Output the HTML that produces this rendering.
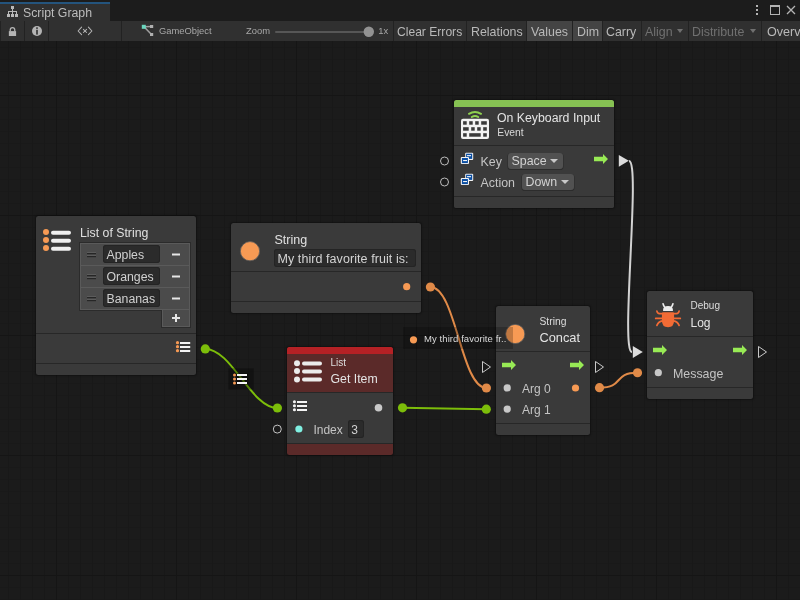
<!DOCTYPE html>
<html><head><meta charset="utf-8">
<style>
*{margin:0;padding:0;box-sizing:border-box}
html,body{width:800px;height:600px;overflow:hidden;background:#1b1b1b;font-family:"Liberation Sans",sans-serif;}
body{will-change:transform}
.a{position:absolute}
.t{position:absolute;white-space:pre;line-height:1;color:#c4c4c4}
#canvas{position:absolute;left:0;top:41px;width:800px;height:559px;background-color:#1b1b1b;
 background-image:
  linear-gradient(to right,#151515 1px,transparent 1px),
  linear-gradient(to bottom,#151515 1px,transparent 1px),
  linear-gradient(to right,#181818 1px,transparent 1px),
  linear-gradient(to bottom,#191919 1px,transparent 1px);
 background-size:120px 120px,120px 120px,12px 12px,12px 12px;
 background-position:56px 54px,56px 54px,8px 6px,8px 6px;}
#hdr{position:absolute;left:0;top:0;width:800px;height:21px;background:#1c1c1c}
#tab{position:absolute;left:0;top:2px;width:110px;height:19px;background:#303030;border-top:2px solid #24547d}
#tb{position:absolute;left:0;top:21px;width:800px;height:20px;background:#303030}
.sep{position:absolute;top:21px;width:1px;height:20px;background:#222}
.btn{position:absolute;top:21px;height:20px;background:#444}
.tbt{position:absolute;top:25.8px;font-size:12.4px;white-space:pre;line-height:1;color:#b9b9b9}
.node{position:absolute;background:#3a3a3a;border-radius:2.5px;overflow:hidden;box-shadow:0 0 1.5px 0.5px rgba(0,0,0,0.35)}
.hd{position:absolute;left:0;right:0;background:#393939}
.dv{position:absolute;left:0;right:0;height:1px;background:#272727}
.dot{position:absolute;border-radius:50%}
.fld{position:absolute;background:#2b2b2b;border-radius:3px;box-shadow:inset 0 0 0 1px #242424}
.dd{position:absolute;background:#515151;border-radius:3px;box-shadow:0 0.5px 0 0.6px #2c2c2c}
.tri{position:absolute;width:0;height:0;border-left:4px solid transparent;border-right:4px solid transparent;border-top:4px solid #c4c4c4}
svg{position:absolute;left:0;top:0;overflow:visible}
</style></head><body>
<div id="canvas"></div>

<!-- ===== header ===== -->
<div id="hdr"></div>
<div id="tab"></div>
<svg width="24" height="24" style="left:0;top:0" viewBox="0 0 24 24">
 <g fill="#b8b8b8"><rect x="11" y="6" width="3" height="3"/><rect x="12" y="9" width="1" height="5"/><rect x="8" y="11" width="9" height="1"/><rect x="8" y="11" width="1" height="3"/><rect x="16" y="11" width="1" height="3"/>
 <rect x="7" y="14" width="3" height="3"/><rect x="11" y="14" width="3" height="3"/><rect x="15" y="14" width="3" height="3"/></g>
</svg>
<div class="t" style="left:23px;top:6.5px;font-size:12.3px;color:#bcbcbc">Script Graph</div>
<!-- window icons -->
<div class="a" style="left:756px;top:5px;width:2px;height:2px;background:#b4b4b4"></div>
<div class="a" style="left:756px;top:9px;width:2px;height:2px;background:#b4b4b4"></div>
<div class="a" style="left:756px;top:13px;width:2px;height:2px;background:#b4b4b4"></div>
<div class="a" style="left:770px;top:5px;width:10px;height:10px;border:1px solid #b4b4b4;border-top-width:2px"></div>
<svg width="10" height="10" style="left:786px;top:5px" viewBox="0 0 10 10"><path d="M1 1L9 9M9 1L1 9" stroke="#b4b4b4" stroke-width="1.3"/></svg>

<!-- ===== toolbar ===== -->
<div id="tb"></div>
<div class="sep" style="left:0px"></div>
<div class="sep" style="left:24px"></div>
<div class="sep" style="left:48px"></div>
<div class="sep" style="left:121px"></div>
<div class="sep" style="left:393px"></div>
<div class="btn" style="left:527px;width:46px"></div>
<div class="btn" style="left:573px;width:30px"></div>
<div class="sep" style="left:466px"></div>
<div class="sep" style="left:526px"></div>
<div class="sep" style="left:572px"></div>
<div class="sep" style="left:602px"></div>
<div class="sep" style="left:641px"></div>
<div class="sep" style="left:688px"></div>
<div class="sep" style="left:761px"></div>
<!-- lock -->
<svg width="10" height="12" style="left:8px;top:26px" viewBox="0 0 10 12"><path d="M2.25 5.3V3.8a2.25 2.25 0 0 1 4.5 0V5.3" fill="none" stroke="#b4b4b4" stroke-width="1.3"/><rect x="0.85" y="5.1" width="7.25" height="4.9" fill="#b4b4b4"/></svg>
<!-- info -->
<svg width="12" height="12" style="left:31px;top:25px" viewBox="0 0 12 12"><circle cx="6" cy="6" r="5" fill="#b4b4b4"/><rect x="5.2" y="2.3" width="1.6" height="1.6" fill="#303030"/><rect x="5.2" y="4.8" width="1.6" height="4.8" fill="#303030"/></svg>
<!-- <x> -->
<svg width="30" height="22" style="left:70px;top:20px" viewBox="0 0 30 22"><path d="M11.6 7.1L8.1 11L11.6 14.6M18.4 7.1L21.9 11L18.4 14.6M13.4 9.3L16.6 12.5M16.6 9.3L13.4 12.5" fill="none" stroke="#b4b4b4" stroke-width="1.05" stroke-linecap="round" stroke-linejoin="round"/></svg>
<!-- gameobject icon -->
<svg width="14" height="13" style="left:141px;top:24px" viewBox="0 0 14 13"><path d="M3 2.8L10.5 2.5M3 2.8L10.5 10.5" stroke="#a0a0a0" stroke-width="1.5"/><rect x="0.8" y="0.8" width="4" height="4" fill="#6ad6be"/><rect x="9" y="1" width="3.2" height="3" fill="#b0b0b0"/><rect x="9" y="9" width="3.2" height="3" fill="#b0b0b0"/></svg>
<div class="tbt" style="left:159px;top:25.8px;font-size:9.4px;color:#a8a8a8">GameObject</div>
<div class="tbt" style="left:246px;top:25.8px;font-size:9.4px;color:#a8a8a8">Zoom</div>
<div class="a" style="left:275px;top:31px;width:96px;height:2px;background:#575757;border-radius:1px"></div>
<svg width="800" height="60" style="left:0;top:0"><circle cx="368.8" cy="31.8" r="5.2" fill="#929292"/></svg>
<div class="tbt" style="left:378.3px;top:25.8px;font-size:9.4px;color:#a8a8a8">1x</div>
<div class="tbt" style="left:397px;font-size:12.1px">Clear Errors</div>
<div class="tbt" style="left:471px">Relations</div>
<div class="tbt" style="left:531px">Values</div>
<div class="tbt" style="left:577px">Dim</div>
<div class="tbt" style="left:606px">Carry</div>
<div class="tbt" style="left:645px;color:#707070">Align</div>
<div class="tri" style="left:676.5px;top:29px;border-top-color:#707070;border-left-width:3.6px;border-right-width:3.6px;border-top-width:4.2px"></div>
<div class="tbt" style="left:692px;color:#707070">Distribute</div>
<div class="tri" style="left:749.6px;top:29px;border-top-color:#707070;border-left-width:3.6px;border-right-width:3.6px;border-top-width:4.2px"></div>
<div class="tbt" style="left:767px;font-size:12.6px">Overview</div>

<!-- ===== connections (under nodes) ===== -->
<svg width="800" height="600" style="left:0;top:0">
 <!-- white flow -->
 <path d="M629 161 C641 161 620 352 632 352" fill="none" stroke="#d2d2d2" stroke-width="2"/>
 <!-- green list -->
 <path d="M205.3 348.9 C231.8 348.9 250.9 408 277.4 408" fill="none" stroke="#7cbd0a" stroke-width="2"/>
 <path d="M402.5 407.8 L486.3 409.2" fill="none" stroke="#7cbd0a" stroke-width="2"/>
 <!-- orange -->
 <path d="M430.4 287 C456 287 461 388 486.4 388" fill="none" stroke="#e08a48" stroke-width="2"/>
 <path d="M599.5 387.7 C624.5 387.7 612.5 372.75 637.5 372.75" fill="none" stroke="#e08a48" stroke-width="2"/>
 <g fill="#7cbd0a"><circle cx="205.3" cy="348.9" r="4.6"/><circle cx="277.4" cy="408" r="4.6"/><circle cx="402.5" cy="407.8" r="4.6"/><circle cx="486.3" cy="409.2" r="4.6"/></g>
 <g fill="#e08a48"><circle cx="430.4" cy="287" r="4.6"/><circle cx="486.4" cy="388" r="4.6"/><circle cx="599.5" cy="387.7" r="4.6"/><circle cx="637.5" cy="372.75" r="4.6"/></g>
 <rect x="228.3" y="368.3" width="25.5" height="21.2" fill="rgba(0,0,0,0.3)"/>
</svg>
<svg width="16" height="14" style="left:233px;top:372px" viewBox="0 0 16 14">
 <g fill="rgba(0,0,0,0.55)"><rect x="3.4" y="1.4" width="11.2" height="3.2"/><rect x="3.4" y="5.4" width="11.2" height="3.2"/><rect x="3.4" y="9.4" width="11.2" height="3.2"/></g>
 <g fill="#f79a54"><circle cx="1.5" cy="3" r="1.5"/><circle cx="1.5" cy="7" r="1.5"/><circle cx="1.5" cy="11" r="1.5"/></g>
 <g fill="#f4f4f4"><rect x="4" y="2" width="10" height="2"/><rect x="4" y="6" width="10" height="2"/><rect x="4" y="10" width="10" height="2"/></g>
</svg>

<!-- ===== Node: On Keyboard Input ===== -->
<div class="node" style="left:454px;top:100px;width:160px;height:108px">
 <div class="a" style="left:0;top:0;width:160px;height:7px;background:#86c153"></div>
 <div class="hd" style="top:7px;height:38px"></div>
 <div class="dv" style="top:45px"></div>
 <div class="dv" style="top:96px"></div>
 <div class="hd" style="top:97px;height:11px;background:#3a3a3a"></div>
</div>
<svg width="40" height="40" style="left:456px;top:106px" viewBox="0 0 40 40">
 <path d="M13 7.8Q19 4.2 25 7.8" fill="none" stroke="#8fd14f" stroke-width="2" stroke-linecap="round"/>
 <path d="M15.8 11Q19 8.9 22.2 11" fill="none" stroke="#8fd14f" stroke-width="2" stroke-linecap="round"/>
 <rect x="5" y="12.7" width="28" height="20.3" rx="2" fill="#f2f2f2"/>
 <g fill="#3a3a3a">
  <rect x="7.1" y="15.2" width="3.6" height="3.5"/><rect x="13.2" y="15.2" width="3.5" height="3.5"/><rect x="19.2" y="15.2" width="3.5" height="3.5"/><rect x="25.2" y="15.2" width="5.6" height="3.5"/>
  <rect x="7.1" y="21.2" width="5.6" height="3.5"/><rect x="15.2" y="21.2" width="3.5" height="3.5"/><rect x="21.2" y="21.2" width="3.5" height="3.5"/><rect x="27.2" y="21.2" width="3.6" height="3.5"/>
  <rect x="7.1" y="27.2" width="3.6" height="3.5"/><rect x="13.2" y="27.2" width="11.5" height="3.5"/><rect x="27.2" y="27.2" width="3.6" height="3.5"/>
 </g>
</svg>
<div class="t" style="left:497px;top:112px;font-size:12.3px;color:#e4e4e4">On Keyboard Input</div>
<div class="t" style="left:497.3px;top:128.2px;font-size:10.3px;color:#d8d8d8">Event</div>
<!-- ports -->
<svg width="800" height="600" style="left:0;top:0"><circle cx="444.5" cy="161" r="4" fill="none" stroke="#bdbdbd" stroke-width="1"/></svg>
<svg width="800" height="600" style="left:0;top:0"><circle cx="444.5" cy="182" r="4" fill="none" stroke="#bdbdbd" stroke-width="1"/></svg>
<svg width="20" height="16" style="left:457px;top:150px" viewBox="0 0 20 16">
 <rect x="8.2" y="2.7" width="8" height="7.4" rx="1" fill="#f4f4f4"/><rect x="9.1" y="3.7" width="6.1" height="5.2" fill="#0b4ea2"/><rect x="10" y="5.1" width="4" height="1.1" fill="#f4f4f4"/>
 <rect x="3.8" y="7" width="8.2" height="7.1" rx="1" fill="#f4f4f4"/><rect x="4.9" y="8" width="6" height="5.1" fill="#0b4ea2"/><rect x="6.1" y="10" width="3.9" height="1.1" fill="#f4f4f4"/>
</svg>
<svg width="20" height="16" style="left:457px;top:171px" viewBox="0 0 20 16">
 <rect x="8.2" y="2.7" width="8" height="7.4" rx="1" fill="#f4f4f4"/><rect x="9.1" y="3.7" width="6.1" height="5.2" fill="#0b4ea2"/><rect x="10" y="5.1" width="4" height="1.1" fill="#f4f4f4"/>
 <rect x="3.8" y="7" width="8.2" height="7.1" rx="1" fill="#f4f4f4"/><rect x="4.9" y="8" width="6" height="5.1" fill="#0b4ea2"/><rect x="6.1" y="10" width="3.9" height="1.1" fill="#f4f4f4"/>
</svg>
<div class="t" style="left:480.5px;top:155.8px;font-size:12.4px">Key</div>
<div class="dd" style="left:508px;top:153px;width:55px;height:16px"></div>
<div class="t" style="left:511.5px;top:154.7px;font-size:12.4px;color:#d2d2d2">Space</div>
<div class="tri" style="left:550.2px;top:158.6px;border-top-color:#c8c8c8;border-left-width:4.1px;border-right-width:4.1px;border-top-width:4.6px"></div>
<div class="t" style="left:480.5px;top:176.6px;font-size:12.4px">Action</div>
<div class="dd" style="left:522px;top:174px;width:52px;height:16px"></div>
<div class="t" style="left:525.5px;top:175.7px;font-size:12.4px;color:#d2d2d2">Down</div>
<div class="tri" style="left:560.6px;top:179.6px;border-top-color:#c8c8c8;border-left-width:4.1px;border-right-width:4.1px;border-top-width:4.6px"></div>
<!-- green arrow -->
<svg width="16" height="12" style="left:593px;top:153px" viewBox="0 0 16 12"><path d="M1 3.8H10V1L15 6L10 11V8.2H1Z" fill="#98ea55"/></svg>
<svg width="14" height="14" style="left:618px;top:154px" viewBox="0 0 14 14"><path d="M0.8 1L10.8 6.8L0.8 12.8Z" fill="#dcdcdc"/></svg>

<!-- ===== Node: List of String ===== -->
<div class="node" style="left:36px;top:216px;width:160px;height:159px">
 <div class="dv" style="top:117px"></div>
 <div class="dv" style="top:147px"></div>
</div>
<svg width="40" height="30" style="left:36px;top:220px" viewBox="0 0 40 30">
 <g fill="#f79a54"><circle cx="10" cy="12" r="3"/><circle cx="10" cy="20" r="3"/><circle cx="10" cy="28" r="3"/></g>
 <g stroke="#f0f0f0" stroke-width="4" stroke-linecap="round"><path d="M17 12.7H33M17 20.7H33M17 28.7H33"/></g>
</svg>
<div class="t" style="left:80px;top:226.8px;font-size:12.3px;color:#e0e0e0">List of String</div>
<div class="a" style="left:79px;top:242px;width:112px;height:69px;background:#2b2b2b"></div>
<div class="a" style="left:161px;top:309px;width:30px;height:19px;background:#2b2b2b"></div>
<div class="a" style="left:80px;top:243px;width:110px;height:67px;background:#5a5a5a"></div>
<div class="a" style="left:162px;top:309px;width:28px;height:18px;background:#5a5a5a"></div>
<div class="a" style="left:81px;top:244px;width:108px;height:21px;background:#4b4b4b"></div>
<div class="a" style="left:81px;top:266px;width:108px;height:21px;background:#4b4b4b"></div>
<div class="a" style="left:81px;top:288px;width:108px;height:21px;background:#4b4b4b"></div>
<div class="a" style="left:163px;top:310px;width:26px;height:16px;background:#4b4b4b"></div>
<div class="fld" style="left:103px;top:245px;width:57px;height:17.5px"></div>
<div class="fld" style="left:103px;top:267px;width:57px;height:17.5px"></div>
<div class="fld" style="left:103px;top:289px;width:57px;height:17.5px"></div>
<div class="t" style="left:106.5px;top:249px;font-size:12.3px;color:#d0d0d0">Apples</div>
<div class="t" style="left:106.5px;top:271px;font-size:12.3px;color:#d0d0d0">Oranges</div>
<div class="t" style="left:106.5px;top:293px;font-size:12.3px;color:#d0d0d0">Bananas</div>
<svg width="110" height="90" style="left:80px;top:243px" viewBox="0 0 110 90">
 <g fill="#5c5c5c"><rect x="7" y="9" width="9" height="1"/><rect x="7" y="12" width="9" height="1"/>
 <rect x="7" y="31" width="9" height="1"/><rect x="7" y="34" width="9" height="1"/>
 <rect x="7" y="53" width="9" height="1"/><rect x="7" y="56" width="9" height="1"/></g>
 <g fill="#262626"><rect x="7" y="10" width="9" height="1.2"/><rect x="7" y="13" width="9" height="1.2"/>
 <rect x="7" y="32" width="9" height="1.2"/><rect x="7" y="35" width="9" height="1.2"/>
 <rect x="7" y="54" width="9" height="1.2"/><rect x="7" y="57" width="9" height="1.2"/></g>
 <g fill="#e6e6e6"><rect x="92" y="10.5" width="8" height="2"/><rect x="92" y="32.5" width="8" height="2"/><rect x="92" y="54.5" width="8" height="2"/>
 <rect x="92" y="74" width="8" height="2"/><rect x="95" y="71" width="2" height="8"/></g>
</svg>
<svg width="16" height="14" style="left:176px;top:340px" viewBox="0 0 16 14">
 <g fill="#f79a54"><circle cx="1.5" cy="2.7" r="1.6"/><circle cx="1.5" cy="6.7" r="1.6"/><circle cx="1.5" cy="10.7" r="1.6"/></g>
 <g fill="#f4f4f4"><rect x="4" y="2" width="10.2" height="2"/><rect x="4" y="6" width="10.2" height="2"/><rect x="4" y="10" width="10.2" height="2"/></g>
</svg>

<!-- ===== Node: String literal ===== -->
<div class="node" style="left:231px;top:223px;width:190px;height:90px">
 <div class="dv" style="top:48px"></div>
 <div class="dv" style="top:78px"></div>
</div>
<svg width="800" height="600" style="left:0;top:0"><circle cx="250" cy="251.2" r="9.6" fill="#f79a54" stroke="#5c5c5c" stroke-width="0.8"/></svg>
<div class="t" style="left:274.5px;top:234px;font-size:12.5px;color:#e0e0e0">String</div>
<div class="fld" style="left:274px;top:249px;width:142px;height:18px"></div>
<div class="t" style="left:277.5px;top:253px;font-size:12.5px;color:#d4d4d4;letter-spacing:0.07px">My third favorite fruit is:</div>
<svg width="800" height="600" style="left:0;top:0"><circle cx="406.7" cy="286.7" r="3.6" fill="#f79a54"/></svg>

<!-- ===== Node: List Get Item ===== -->
<div class="node" style="left:287px;top:347px;width:106px;height:108px;background:#5b2a29">
 <div class="a" style="left:0;top:0;width:106px;height:7px;background:#b52125"></div>
 <div class="dv" style="top:45px"></div>
 <div class="a" style="left:0;top:46px;width:106px;height:50px;background:#3a3a3a"></div>
 <div class="dv" style="top:96px"></div>
</div>
<svg width="30" height="30" style="left:287px;top:355px" viewBox="0 0 30 30">
 <g fill="#ebebeb"><circle cx="10" cy="8.2" r="3"/><circle cx="10" cy="16" r="3"/><circle cx="10" cy="24.5" r="3"/></g>
 <g stroke="#ebebeb" stroke-width="4" stroke-linecap="round"><path d="M17 8.5H33M17 16.5H33M17 24.5H33"/></g>
</svg>
<div class="t" style="left:330.5px;top:357.5px;font-size:10px;color:#dedede">List</div>
<div class="t" style="left:330.5px;top:372.6px;font-size:12.3px;color:#e4e4e4">Get Item</div>
<svg width="16" height="14" style="left:292px;top:399px" viewBox="0 0 16 14">
 <g fill="#f4f4f4"><circle cx="2.45" cy="2.8" r="1.55"/><circle cx="2.45" cy="6.8" r="1.55"/><circle cx="2.45" cy="10.8" r="1.55"/>
 <rect x="5" y="2" width="10" height="2"/><rect x="5" y="6" width="10" height="2"/><rect x="5" y="10" width="10" height="2"/></g>
</svg>
<svg width="800" height="600" style="left:0;top:0"><circle cx="378.5" cy="407.75" r="3.8" fill="#c8c8c8"/></svg>
<svg width="800" height="600" style="left:0;top:0"><circle cx="277.3" cy="429.1" r="4" fill="none" stroke="#c4c4c4" stroke-width="1"/></svg>
<svg width="800" height="600" style="left:0;top:0"><circle cx="298.9" cy="429" r="3.6" fill="#80f0e2"/></svg>
<div class="t" style="left:313.4px;top:423.8px;font-size:12px">Index</div>
<div class="fld" style="left:348px;top:420px;width:15.6px;height:17.5px"></div>
<div class="t" style="left:351.3px;top:423.8px;font-size:12px;color:#d0d0d0">3</div>

<!-- ===== Node: String Concat ===== -->
<div class="node" style="left:496px;top:306px;width:94px;height:129px">
 <div class="dv" style="top:45px"></div>
 <div class="dv" style="top:117px"></div>
</div>
<svg width="800" height="600" style="left:0;top:0"><circle cx="515.2" cy="334" r="9.6" fill="#f79a54" stroke="#5c5c5c" stroke-width="0.8"/></svg>
<div class="t" style="left:539.5px;top:317.1px;font-size:10.3px;color:#dcdcdc">String</div>
<div class="t" style="left:539.5px;top:331.7px;font-size:12.8px;color:#e4e4e4">Concat</div>
<svg width="12" height="14" style="left:481px;top:360px" viewBox="0 0 12 14"><path d="M1.5 1.5L9.5 7L1.5 12.5Z" fill="none" stroke="#c8c8c8" stroke-width="1"/></svg>
<svg width="16" height="12" style="left:501px;top:359px" viewBox="0 0 16 12"><path d="M1 3.8H10V1L15 6L10 11V8.2H1Z" fill="#98ea55"/></svg>
<svg width="16" height="12" style="left:569px;top:359px" viewBox="0 0 16 12"><path d="M1 3.8H10V1L15 6L10 11V8.2H1Z" fill="#98ea55"/></svg>
<svg width="12" height="14" style="left:594px;top:360px" viewBox="0 0 12 14"><path d="M1.5 1.5L9.5 7L1.5 12.5Z" fill="none" stroke="#c8c8c8" stroke-width="1"/></svg>
<svg width="800" height="600" style="left:0;top:0"><circle cx="507.2" cy="387.9" r="3.6" fill="#c8c8c8"/></svg>
<svg width="800" height="600" style="left:0;top:0"><circle cx="507.2" cy="409.1" r="3.6" fill="#c8c8c8"/></svg>
<div class="t" style="left:522px;top:382.9px;font-size:12px">Arg 0</div>
<div class="t" style="left:522px;top:404px;font-size:12px">Arg 1</div>
<svg width="800" height="600" style="left:0;top:0"><circle cx="575.5" cy="388" r="3.6" fill="#f79a54"/></svg>

<!-- tooltip -->
<div class="a" style="left:403px;top:327px;width:110px;height:22px;background:rgba(0,0,0,0.22)"></div>
<svg width="800" height="600" style="left:0;top:0"><circle cx="413.5" cy="339.8" r="3.6" fill="#f79a54"/></svg>
<div class="t" style="left:424px;top:334.3px;font-size:9.5px;color:#dadada;letter-spacing:0.08px">My third favorite fr..</div>

<!-- ===== Node: Debug Log ===== -->
<div class="node" style="left:647px;top:291px;width:106px;height:108px">
 <div class="dv" style="top:45px"></div>
 <div class="dv" style="top:96px"></div>
</div>
<svg width="32" height="32" style="left:652px;top:298px" viewBox="0 0 32 32">
 <path d="M11.1 5.9Q11.6 7.8 12.6 9M20.9 5.9Q20.4 7.8 19.4 9" stroke="#ececec" stroke-width="1.7" stroke-linecap="round" fill="none"/>
 <path d="M11.1 13.1V11.8Q11.1 8 16 8Q20.9 8 20.9 11.8V13.1Z" fill="#ececec"/>
 <path d="M9.9 15.5Q9.9 14.3 11.2 14.3H20.8Q22.1 14.3 22.1 15.5V22.5Q22.1 29.2 16 29.2Q9.9 29.2 9.9 22.5Z" fill="#f26b35"/>
 <g stroke="#f26b35" stroke-width="1.7" fill="none" stroke-linecap="round">
  <path d="M10.5 15.6H7.5Q5.3 15.6 4.9 13.2M21.5 15.6H24.5Q26.7 15.6 27.1 13.2"/>
  <path d="M3.7 20.4H10.5M21.5 20.4H28.3"/>
  <path d="M10.5 22.9Q6.5 23.5 4.9 27.4M21.5 22.9Q25.5 23.5 27.1 27.4"/>
 </g>
</svg>
<div class="t" style="left:690.5px;top:301.3px;font-size:10px;color:#dcdcdc">Debug</div>
<div class="t" style="left:690.5px;top:316.6px;font-size:12px;color:#e4e4e4">Log</div>
<svg width="14" height="14" style="left:632px;top:345px" viewBox="0 0 14 14"><path d="M0.8 1L10.8 7L0.8 13Z" fill="#dcdcdc"/></svg>
<svg width="16" height="12" style="left:652px;top:344px" viewBox="0 0 16 12"><path d="M1 3.8H10V1L15 6L10 11V8.2H1Z" fill="#98ea55"/></svg>
<svg width="16" height="12" style="left:732px;top:344px" viewBox="0 0 16 12"><path d="M1 3.8H10V1L15 6L10 11V8.2H1Z" fill="#98ea55"/></svg>
<svg width="12" height="14" style="left:757px;top:345px" viewBox="0 0 12 14"><path d="M1.5 1.5L9.5 7L1.5 12.5Z" fill="none" stroke="#c8c8c8" stroke-width="1"/></svg>
<svg width="800" height="600" style="left:0;top:0"><circle cx="658.3" cy="372.7" r="3.6" fill="#c8c8c8"/></svg>
<div class="t" style="left:673px;top:367.8px;font-size:12.4px">Message</div>

</body></html>
